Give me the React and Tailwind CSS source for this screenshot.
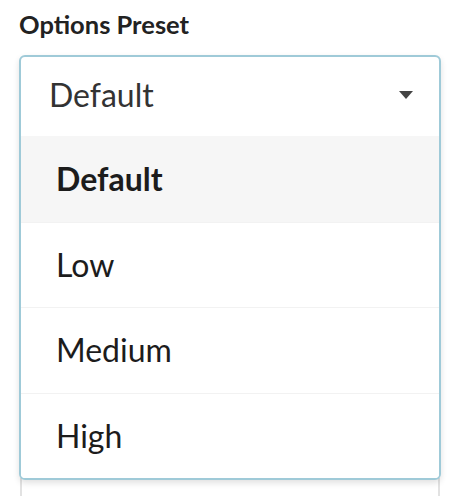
import React, { useState } from 'react';

const options = ['Default', 'Low', 'Medium', 'High'];

export default function App() {
  const [selected, setSelected] = useState('Default');

  return (
    <div className="w-[468px] h-[496px] overflow-hidden bg-white font-['Lato','Liberation_Sans',sans-serif]">
      <div className="pt-[8px] pl-[19px] pr-[27px]">
        <label className="block text-[25.5px] font-bold text-[#222] leading-[32px]">Options Preset</label>

        <div className="relative mt-[15px]">
          <div className="relative z-10 rounded-[6px] border-2 border-[#9fcad8] bg-white shadow-[0_3px_6px_rgba(0,0,0,0.12)] overflow-hidden">
            {/* Control */}
            <div className="flex items-center justify-between h-[79px] pl-[28px] pr-[26px] pb-[4px]">
              <span className="text-[32px] text-[#333]">{selected}</span>
              <svg width="14" height="8" viewBox="0 0 14 8">
                <path d="M0 0h14L7 8z" fill="#444" />
              </svg>
            </div>

            {/* Menu */}
            <ul>
              {options.map((o, i) => (
                <li
                  key={o}
                  onClick={() => setSelected(o)}
                  className={`flex items-center h-[85.5px] pl-[35px] text-[32px] text-[#1c1c1c] ${
                    i > 0 ? 'border-t border-[#f2f2f2]' : ''
                  } ${o === selected ? 'bg-[#f6f6f6] font-bold' : 'bg-white'}`}
                >
                  {o}
                </li>
              ))}
            </ul>
          </div>

          {/* next field peeking out below */}
          <div className="h-[40px] mx-[1px] -mt-[2px] border-x-2 border-[#e2e2e2] bg-white"></div>
        </div>
      </div>
    </div>
  );
}
